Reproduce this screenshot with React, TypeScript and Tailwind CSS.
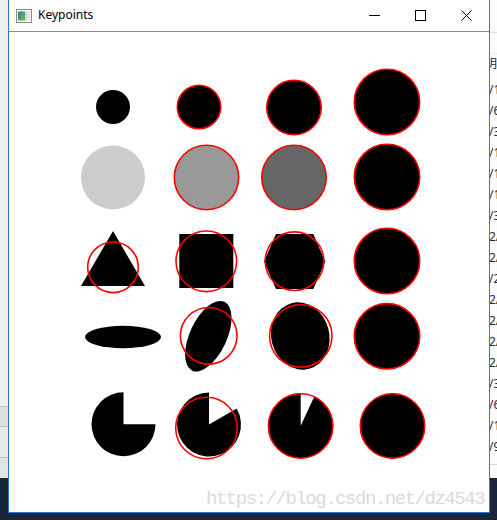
import React from "react";

const explorerRows = ["/1", "/6", "/3", "/1", "/1", "/1", "/3", "2/", "2/", "/2", "2/", "2/", "2/", "2/", "/3", "/6", "/1", "/9"];

function WindowIcon() {
  return (
    <svg width="16" height="14" viewBox="0 0 16 14">
      <defs>
        <linearGradient id="ig" x1="0" y1="0" x2="1" y2="1">
          <stop offset="0" stopColor="#2f7f86" />
          <stop offset="1" stopColor="#79b86a" />
        </linearGradient>
      </defs>
      <rect x="0.5" y="0.5" width="15" height="13" fill="#f4f4f4" stroke="#8c8c8c" />
      <rect x="2" y="2.5" width="7" height="9" fill="url(#ig)" />
      <rect x="9" y="2.5" width="2" height="9" fill="#c9d6d6" />
      <rect x="11.5" y="2.5" width="2.5" height="9" fill="#e2e6e6" />
    </svg>
  );
}

function CaptionButtons() {
  return (
    <div className="flex h-full">
      <div className="w-[46px] h-full flex items-center justify-center">
        <svg width="11" height="11" viewBox="0 0 11 11">
          <path d="M0 5.5H11" stroke="#000" strokeWidth="1" />
        </svg>
      </div>
      <div className="w-[46px] h-full flex items-center justify-center">
        <svg width="11" height="11" viewBox="0 0 11 11">
          <rect x="0.5" y="0.5" width="10" height="10" fill="none" stroke="#000" />
        </svg>
      </div>
      <div className="w-[46px] h-full flex items-center justify-center">
        <svg width="11" height="11" viewBox="0 0 11 11">
          <path d="M0.5 0.5L10.5 10.5M10.5 0.5L0.5 10.5" stroke="#000" strokeWidth="1" />
        </svg>
      </div>
    </div>
  );
}

// wedge-cut circle: missing slice from 12 o'clock clockwise to `cut` degrees
function cutCircle(cx: number, cy: number, r: number, cut: number) {
  const a = (cut * Math.PI) / 180;
  const sx = cx + r * Math.sin(a);
  const sy = cy - r * Math.cos(a);
  const large = 360 - cut > 180 ? 1 : 0;
  return `M${cx} ${cy} L${sx} ${sy} A${r} ${r} 0 ${large} 1 ${cx} ${cy - r} Z`;
}

function Ring({ cx, cy, r }: { cx: number; cy: number; r: number }) {
  return <circle cx={cx} cy={cy} r={r} fill="none" stroke="#ff0000" strokeWidth="1.6" />;
}

function Keypoints() {
  return (
    <svg width="480" height="480" viewBox="9 32 480 480" className="block">
      <rect x="9" y="32" width="480" height="480" fill="#fff" />

      {/* row 1 */}
      <circle cx="113" cy="107" r="17" fill="#000" />
      <circle cx="199" cy="107" r="22" fill="#000" />
      <Ring cx={199} cy={107} r={21.7} />
      <circle cx="294" cy="107.5" r="27.5" fill="#000" />
      <Ring cx={294} cy={107.5} r={27.2} />
      <circle cx="387" cy="102" r="33" fill="#000" />
      <Ring cx={387} cy={102} r={32.7} />

      {/* row 2 */}
      <circle cx="113" cy="177.5" r="32" fill="#cccccc" />
      <circle cx="206.5" cy="177.5" r="32.5" fill="#999999" />
      <Ring cx={206.5} cy={177.5} r={32.2} />
      <circle cx="294" cy="177.5" r="32.5" fill="#666666" />
      <Ring cx={294} cy={177.5} r={32.2} />
      <circle cx="387" cy="177" r="33" fill="#000" />
      <Ring cx={387} cy={177} r={32.7} />

      {/* row 3 */}
      <polygon points="113,231 81,286 145,286" fill="#000" />
      <Ring cx={113} cy={267.3} r={25.3} />
      <rect x="179.3" y="234" width="54" height="54" fill="#000" />
      <Ring cx={206.3} cy={261.3} r={30.3} />
      <polygon points="264,261.5 276,234 313.3,234 325.3,261.5 313.3,289 276,289" fill="#000" />
      <Ring cx={294.5} cy={261.2} r={29.3} />
      <circle cx="387" cy="261" r="33" fill="#000" />
      <Ring cx={387} cy={261} r={32.7} />

      {/* row 4 */}
      <ellipse cx="123" cy="337" rx="38" ry="11.2" fill="#000" />
      <ellipse cx="0" cy="0" rx="18.5" ry="38" fill="#000" transform="translate(208.3 336.2) rotate(25)" />
      <Ring cx={208.7} cy={335.8} r={28.3} />
      <ellipse cx="0" cy="0" rx="29" ry="34" fill="#000" transform="translate(300.3 336) rotate(-15)" />
      <Ring cx={300.8} cy={336} r={31.2} />
      <circle cx="387" cy="336.3" r="33" fill="#000" />
      <Ring cx={387} cy={336.3} r={32.7} />

      {/* row 5 */}
      <path d={cutCircle(123.5, 424.3, 32, 90)} fill="#000" />
      <path d={cutCircle(209, 424.5, 32, 60)} fill="#000" />
      <Ring cx={206.5} cy={428} r={30.8} />
      <path d={cutCircle(300.7, 425.8, 32.5, 25)} fill="#000" />
      <Ring cx={300.6} cy={426} r={32.2} />
      <circle cx="392.5" cy="426" r="32.5" fill="#000" />
      <Ring cx={392.5} cy={426} r={32.2} />
    </svg>
  );
}

export default function App() {
  return (
    <div className="relative w-[497px] h-[520px] overflow-hidden bg-[#17263a] flex items-start">
      {/* window behind, left edge */}
      <div className="w-[8px] h-[478px] bg-[#f0f0f0] flex flex-col shrink-0">
        <div className="h-[406px]" />
        <div className="h-[20px] bg-[#dedede] border-t border-[#c4c4c4]" />
        <div className="h-[31px] bg-[#e8e8e8] border-t border-[#c4c4c4]" />
        <div className="flex-1 bg-[#e3e3e3] border-t border-[#c4c4c4]" />
      </div>

      {/* Keypoints window */}
      <div className="w-[482px] h-[513px] shrink-0 flex flex-col bg-white border-l border-r border-b border-[#2b7bd6]">
        <div className="h-[31px] flex items-center shrink-0">
          <div className="w-[7px]" />
          <WindowIcon />
          <span className="ml-[6px] text-[12px] text-black leading-none font-['Noto_Sans',sans-serif] pb-[1px]">
            Keypoints
          </span>
          <div className="flex-1" />
          <CaptionButtons />
        </div>
        <div className="h-px bg-[#8a8a8a] shrink-0" />
        <div className="relative">
          <Keypoints />
          <span className="absolute left-[197px] top-[458px] text-[19px] leading-none tracking-[-1.47px] text-[#dadad6] font-['Liberation_Mono',monospace] whitespace-nowrap">
            https://blog.csdn.net/dz4543
          </span>
        </div>
      </div>

      {/* explorer behind, right edge */}
      <div className="w-[7px] h-[478px] shrink-0 bg-[#fbfbfb] overflow-hidden flex flex-col font-['Noto_Sans','Noto_Sans_CJK_SC',sans-serif] text-[12px] text-[#2a2a2a] leading-none">
        <div className="h-[33px] border-b border-[#e0e0e0]" />
        <div className="h-[21px] border-b border-[#ececec]" />
        <div className="h-[19px] flex items-center -ml-[5px] whitespace-nowrap">
          <span>明</span>
        </div>
        <div className="h-[6px]" />
        {explorerRows.map((t, i) => (
          <div key={i} className="h-[21.06px] flex items-center -ml-[1px] whitespace-nowrap">
            <span>{t}</span>
          </div>
        ))}
        <div className="mt-[6px] border-t border-[#d8d8d8]" />
      </div>
    </div>
  );
}
